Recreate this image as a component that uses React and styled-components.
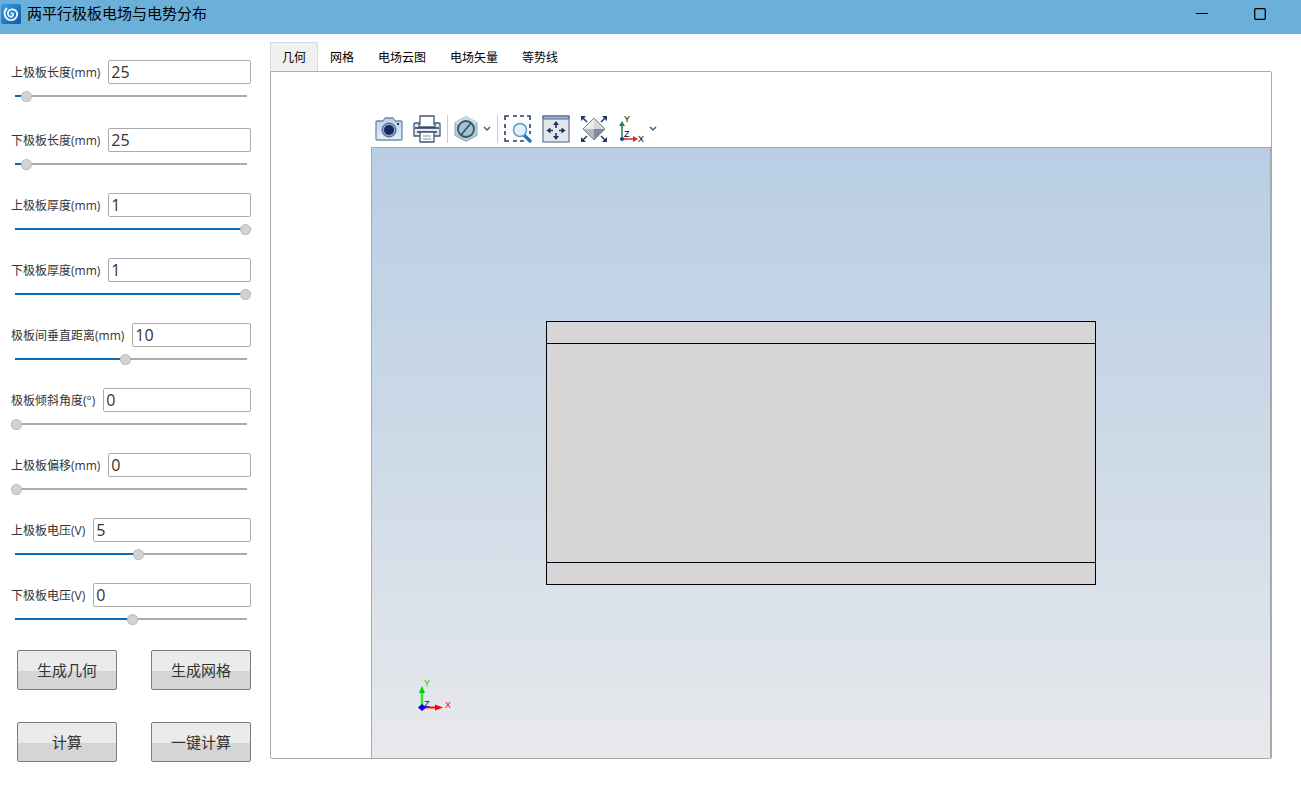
import React, { useState } from "react";
import styled, { createGlobalStyle } from "styled-components";

const fieldList = [
  { id: "topLength", label: "上极板长度(mm)", value: 25, min: 20, max: 130 },
  { id: "bottomLength", label: "下极板长度(mm)", value: 25, min: 20, max: 130 },
  { id: "topThickness", label: "上极板厚度(mm)", value: 1, min: 0, max: 1 },
  { id: "bottomThickness", label: "下极板厚度(mm)", value: 1, min: 0, max: 1 },
  { id: "distance", label: "极板间垂直距离(mm)", value: 10, min: 0, max: 21 },
  { id: "angle", label: "极板倾斜角度(°)", value: 0, min: 0, max: 90 },
  { id: "offset", label: "上极板偏移(mm)", value: 0, min: 0, max: 20 },
  { id: "topVoltage", label: "上极板电压(V)", value: 5, min: -75, max: 75 },
  { id: "bottomVoltage", label: "下极板电压(V)", value: 0, min: -76, max: 74 },
];
const tabs = ["几何", "网格", "电场云图", "电场矢量", "等势线"];
const actions = ["生成几何", "生成网格", "计算", "一键计算"];

function LogoIcon() {
  return (
    <svg width="20" height="20" viewBox="0 0 20 20">
      <defs>
        <linearGradient id="logo" x1="0" y1="0" x2="1" y2="1">
          <stop offset="0" stopColor="#35a0e6" />
          <stop offset="1" stopColor="#0c57ab" />
        </linearGradient>
      </defs>
      <rect width="20" height="20" rx="2" fill="url(#logo)" />
      <path
        d="M5.500 4.500C2.500 7.500 3 14 8 15.800C13 17.300 17 13 16 8.800C14.800 4.800 9 4.200 7.200 7.800C6 11.200 8.500 13.300 11 12.500C12.800 11.500 12.600 9 10.500 9.200"
        fill="none"
        stroke="#eaf6ff"
        strokeWidth="1.900"
        strokeLinecap="round"
      />
    </svg>
  );
}

function CameraIcon() {
  return (
    <svg width="28" height="28" viewBox="0 0 28 28">
      <defs>
        <linearGradient id="camera" x1="0" y1="0" x2="0" y2="1">
          <stop offset="0" stopColor="#b9cfe9" />
          <stop offset="1" stopColor="#e4eef9" />
        </linearGradient>
      </defs>
      <path d="M2 6h6l2-3h8l2 3h6q1 0 1 1v17q0 1-1 1H2q-1 0-1-1V7q0-1 1-1z" fill="url(#camera)" stroke="#6f88ab" strokeWidth="1.300" strokeLinejoin="round" />
      <circle cx="14" cy="15" r="7" fill="#8ba3c8" stroke="#41598a" />
      <circle cx="14" cy="15" r="5" fill="#14295c" />
      <rect x="22" y="8" width="2" height="2" fill="#1d3768" />
    </svg>
  );
}

function PrinterIcon() {
  return (
    <svg width="28" height="28" viewBox="0 0 28 28" strokeLinejoin="round">
      <path d="M7 10V1h14v9" fill="#fff" stroke="#42557b" strokeWidth="1.300" />
      <path d="M2 8h4v4h16V8h4q1 0 1 1v12H1V9q0-1 1-1z" fill="#e6ebf2" stroke="#42557b" strokeWidth="1.300" />
      <path d="M2 13h24M4 17h20" stroke="#24385f" strokeWidth="1.500" />
      <path d="M7 17h14v10H7z" fill="#fff" stroke="#42557b" strokeWidth="1.300" />
      <path d="M10 21h8M10 24h8" stroke="#8293ad" />
    </svg>
  );
}

function HideIcon() {
  return (
    <svg width="24" height="28" viewBox="0 0 24 28">
      <path d="M12 1.500l11 6v13l-11 6-11-6v-13z" fill="#b7c9d5" stroke="#93a9b9" />
      <path d="M1 7.500l11-6 11 6-11 6z" fill="#cddbe4" />
      <circle cx="12" cy="14" r="8" fill="#a9c0cd" stroke="#2b5a6b" strokeWidth="1.800" />
      <path d="M7 20L17 8" stroke="#2b5a6b" strokeWidth="1.800" />
    </svg>
  );
}

function ZoomBoxIcon() {
  return (
    <svg width="28" height="28" viewBox="0 0 28 28">
      <path
        d="M1 5V1h4M9 1h4M16 1h4M23 1h3v4M26 9v4M26 16v3M1 9v4M1 16v4M1 23v3h4M9 26h4M16 26h4"
        fill="none"
        stroke="#2a4068"
        strokeWidth="1.600"
      />
      <path d="M20 20l6 6" stroke="#2374b4" strokeWidth="3.400" strokeLinecap="round" />
      <circle cx="16" cy="15" r="6.500" fill="#e3eef8" stroke="#5b9dd0" strokeWidth="1.500" />
    </svg>
  );
}

function ExtentsIcon() {
  return (
    <svg width="28" height="28" viewBox="0 0 28 28">
      <rect x="1" y="1" width="26" height="26" fill="#e2e7ee" stroke="#6b7f9f" strokeWidth="1.300" />
      <path d="M1 1h26v3H1z" fill="#9db4d5" stroke="#526b93" />
      <path d="M14 9v4M14 18v4M7 15.500h4M17 15.500h4" stroke="#1e365f" strokeWidth="1.600" />
      <path d="M14 6l3 4h-6zM14 25l3-4h-6zM4.500 15.500l4-3v6zM23.500 15.500l-4-3v6z" fill="#1e365f" />
    </svg>
  );
}

function FitIcon() {
  return (
    <svg width="28" height="28" viewBox="0 0 28 28">
      <path d="M14 3v11H3z" fill="#e9ecef" />
      <path d="M14 3v11h11z" fill="#d5d9dd" />
      <path d="M14 25L3 14h11z" fill="#b4b9c0" />
      <path d="M14 25l11-11H14z" fill="#858b94" />
      <path d="M14 3l11 11-11 11L3 14z" fill="none" stroke="#7c828c" />
      <path d="M7 7L2 2M21 7l5-5M7 21l-5 5M21 21l5 5" stroke="#1f386a" strokeWidth="1.500" />
      <path d="M1 1h5L1 6zM27 1h-5l5 5zM1 27h5l-5-5zM27 27h-5l5-5z" fill="#1f386a" />
    </svg>
  );
}

function AxesIcon() {
  return (
    <svg width="26" height="30" viewBox="0 0 26 30" fontFamily="Liberation Sans, sans-serif" fontSize="9">
      <path d="M4 25V10" stroke="#16893f" strokeWidth="1.500" />
      <path d="M4 7l3 5H1z" fill="#16893f" />
      <path d="M4 25h12" stroke="#e0222c" strokeWidth="1.500" />
      <path d="M20 25l-5-3v6z" fill="#e0222c" />
      <circle cx="4" cy="25" r="2" fill="#1740a8" />
      <text x="6" y="8">Y</text>
      <text x="6" y="23">Z</text>
      <text x="20" y="28">X</text>
    </svg>
  );
}

function ChevronIcon() {
  return (
    <svg width="8" height="6" viewBox="0 0 8 6">
      <path d="M1 1l3 3 3-3" fill="none" stroke="#4a6275" strokeWidth="1.500" />
    </svg>
  );
}

function Triad() {
  return (
    <TriadSvg width="44" height="44" viewBox="0 -6 44 44" fontFamily="Liberation Sans, sans-serif" fontSize="9">
      <path d="M9 28V14" stroke="#7bea7b" strokeWidth="3" />
      <path d="M9 28V14" stroke="#00d200" />
      <path d="M9 7l3 7H6z" fill="#00d200" />
      <path d="M9 28.500h14" stroke="#f58a8a" strokeWidth="3" />
      <path d="M9 28.500h14" stroke="#f00" />
      <path d="M30 28.500l-8-3v6z" fill="#f00" />
      <path d="M9 25l4 3.500-4 3.500-4-3.500z" fill="#00f" />
      <text x="11" y="7" fill="#00d200">Y</text>
      <text x="11" y="28" fill="#0000b4">Z</text>
      <text x="32" y="29" fill="#f00">X</text>
    </TriadSvg>
  );
}

function Field({ field, value, onChange }) {
  const ratio = (value - field.min) / (field.max - field.min);
  return (
    <FieldBox>
      <FieldRow>
        <label htmlFor={field.id}>{field.label}</label>
        <TextInput id={field.id} type="text" value={value} onChange={(e) => onChange(e.target.value)} />
      </FieldRow>
      <Slider
        type="range"
        aria-label={field.label}
        min={field.min}
        max={field.max}
        value={value}
        style={{ "--fill": ratio * 100 + "%" }}
        onChange={(e) => onChange(e.target.value)}
      />
    </FieldBox>
  );
}

export default function App() {
  const [values, setValues] = useState(
    Object.fromEntries(fieldList.map((f) => [f.id, f.value]))
  );
  const [active, setActive] = useState(0);

  return (
    <Window>
      <GlobalStyle />
      <TitleBar>
        <LogoIcon />
        <Title>两平行极板电场与电势分布</Title>
        <WindowButton aria-label="最小化">
          <svg width="12" height="12" viewBox="0 0 12 12">
            <path d="M0 5.500h12" stroke="#000" />
          </svg>
        </WindowButton>
        <WindowButton aria-label="最大化">
          <svg width="12" height="12" viewBox="0 0 12 12">
            <rect x="0.700" y="0.700" width="10.600" height="10.600" rx="1" fill="none" stroke="#000" strokeWidth="1.300" />
          </svg>
        </WindowButton>
      </TitleBar>
      <Body>
        <Sidebar>
          {fieldList.map((f) => (
            <Field
              key={f.id}
              field={f}
              value={values[f.id]}
              onChange={(v) => setValues({ ...values, [f.id]: v })}
            />
          ))}
          <Actions>
            {actions.map((a) => (
              <ActionButton key={a} type="button">{a}</ActionButton>
            ))}
          </Actions>
        </Sidebar>
        <Main>
          <TabBar role="tablist">
            {tabs.map((t, i) => (
              <Tab key={t} type="button" role="tab" aria-selected={i === active} $active={i === active} onClick={() => setActive(i)}>
                {t}
              </Tab>
            ))}
          </TabBar>
          <Panel>
            <Toolbar>
              <Tool aria-label="截图"><CameraIcon /></Tool>
              <Tool aria-label="打印"><PrinterIcon /></Tool>
              <Divider />
              <Tool aria-label="隐藏"><HideIcon /><ChevronIcon /></Tool>
              <Divider />
              <Tool aria-label="框选缩放"><ZoomBoxIcon /></Tool>
              <Tool aria-label="缩放到窗口"><ExtentsIcon /></Tool>
              <Tool aria-label="适应大小"><FitIcon /></Tool>
              <Tool aria-label="视图方向"><AxesIcon /><ChevronIcon /></Tool>
            </Toolbar>
            <Viewport>
              <Plates>
                <Plate />
                <Gap />
                <Plate $lower />
              </Plates>
              <Triad />
            </Viewport>
          </Panel>
        </Main>
      </Body>
    </Window>
  );
}

const GlobalStyle = createGlobalStyle`
  * {
    box-sizing: border-box;
  }
  body {
    margin: 0;
    background: #fff;
    font-family: "Open Sans", "Noto Sans CJK SC", sans-serif;
  }
  button, input {
    font-family: inherit;
  }
  svg {
    display: block;
    flex: none;
  }
`;

const Window = styled.div`
  display: flex;
  flex-direction: column;
  min-height: 100vh;
`;

const TitleBar = styled.header`
  display: flex;
  align-items: flex-start;
  height: 34px;
  padding: 4px 12px 0 1px;
  background: #6ab0d9;
  border-bottom: 1px solid #93a0b0;
`;

const Title = styled.h1`
  flex: 1;
  margin: 0 0 0 6px;
  font-size: 15px;
  font-weight: 400;
  line-height: 18px;
  color: #000;
`;

const WindowButton = styled.button`
  display: flex;
  align-items: center;
  justify-content: center;
  width: 58px;
  height: 20px;
  padding: 0;
  border: 0;
  background: none;
`;

const Body = styled.div`
  display: flex;
  flex: 1;
`;

const Sidebar = styled.aside`
  flex: none;
  width: 270px;
  padding: 26px 19px 0 11px;
`;

const FieldBox = styled.div`
  height: 65px;

  &:first-child {
    height: 68px;
  }
`;

const FieldRow = styled.div`
  display: flex;
  align-items: center;
  gap: 8px;
  height: 24px;

  label {
    padding-top: 2px;
    font-size: 12px;
    line-height: 22px;
    color: #333;
    white-space: nowrap;
  }
`;

const TextInput = styled.input`
  flex: 1;
  min-width: 0;
  height: 24px;
  padding: 0 2px;
  border: 1px solid #ababab;
  border-radius: 2px;
  background: #fff;
  font-size: 16px;
  color: #333;
  outline: 0;
`;

const Slider = styled.input`
  display: block;
  appearance: none;
  width: 100%;
  height: 11px;
  margin: 7px 0 0;
  background:
    linear-gradient(#0a6ab6, #0a6ab6) 4px 4px no-repeat,
    linear-gradient(#ababab, #ababab) 4px 4px no-repeat;
  background-size: calc(var(--fill) - 4px) 2px, calc(100% - 8px) 2px;
  outline: 0;

  &::-webkit-slider-thumb {
    appearance: none;
    width: 11px;
    height: 11px;
    border: 1px dotted #a5a5a5;
    border-radius: 50%;
    background: #d2d2d2;
  }
`;

const Actions = styled.div`
  display: grid;
  grid-template-columns: 100px 100px;
  justify-content: space-between;
  row-gap: 32px;
  padding: 2px 0 32px 6px;
`;

const ActionButton = styled.button`
  height: 40px;
  padding: 0 0 2px;
  border: 1px solid #7c7c7c;
  border-radius: 2px;
  background: linear-gradient(#ebebeb 52%, #d5d5d5 52%);
  font-size: 15px;
  color: #333;
`;

const Main = styled.main`
  display: flex;
  flex: 1;
  flex-direction: column;
  min-width: 0;
  padding: 8px 29px 37px 0;
`;

const TabBar = styled.div`
  display: flex;
  height: 29px;
`;

const Tab = styled.button`
  height: 29px;
  padding: 0 11px;
  border: 1px solid ${(p) => (p.$active ? "#d9d9d9" : "transparent")};
  border-bottom: 0;
  background: ${(p) => (p.$active ? "#f0f0f0" : "transparent")};
  font-size: 12px;
  color: #000;
`;

const Panel = styled.section`
  display: flex;
  flex: 1;
  flex-direction: column;
  border: 1px solid #ababab;
  border-radius: 0 2px 2px 2px;
  padding: 38px 0 0 100px;
`;

const Toolbar = styled.div`
  display: flex;
  align-items: center;
  height: 37px;
  padding: 0 4px;
`;

const Tool = styled.button`
  display: flex;
  align-items: center;
  gap: 5px;
  height: 30px;
  margin-right: 10px;
  padding: 0;
  border: 0;
  background: none;
`;

const Divider = styled.div`
  width: 1px;
  height: 28px;
  margin: 0 6px 0 -4px;
  background: #ccc;
`;

const Viewport = styled.div`
  position: relative;
  display: flex;
  flex: 1;
  align-items: center;
  justify-content: center;
  border: solid #a5a8ad;
  border-width: 1px 1px 0 1px;
  background: linear-gradient(#b9cee5, #cddae7 50%, #e8e9ec);
`;

const Plates = styled.div`
  display: flex;
  flex-direction: column;
  width: 61.2%;
  height: 264px;
  border: 1px solid #000;
  background: #d6d6d6;
`;

const Plate = styled.div`
  height: 21px;
  background: ${(p) => (p.$lower ? "#d6d4d6" : "#d6d6d6")};
`;

const Gap = styled.div`
  flex: 1;
  border: solid #000;
  border-width: 1px 0;
`;

const TriadSvg = styled.svg`
  position: absolute;
  left: 41px;
  bottom: 41px;
`;
